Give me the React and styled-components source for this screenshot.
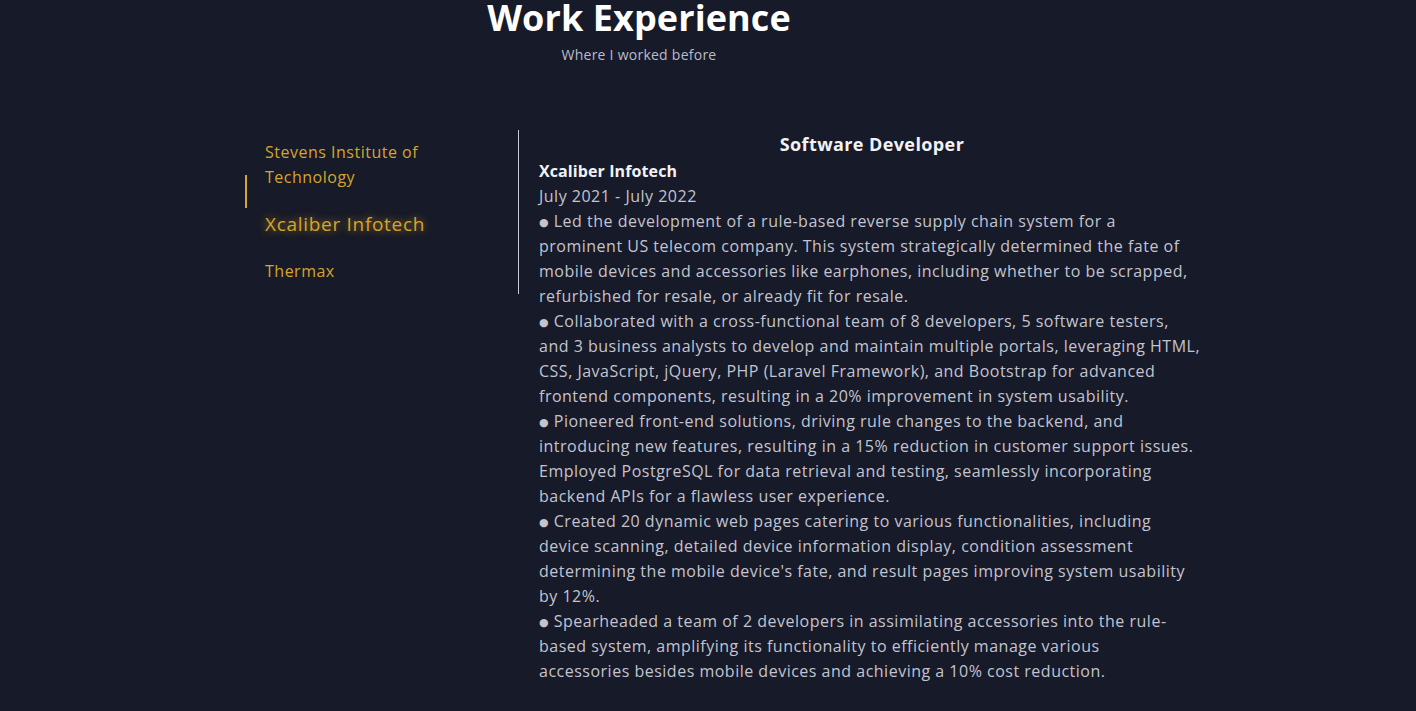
import styled, { createGlobalStyle } from 'styled-components';
import { useState } from 'react';

// each point is kept as the lines it breaks into, so the wraps stay fixed
const jobs = [
  {
    tab: 'Stevens Institute of Technology',
    role: 'Graduate Student',
    company: 'Stevens Institute of Technology',
    dates: 'Sept 2022 - Present',
    points: [],
  },
  {
    tab: 'Xcaliber Infotech',
    role: 'Software Developer',
    company: 'Xcaliber Infotech',
    dates: 'July 2021 - July 2022',
    points: [
      [
        'Led the development of a rule-based reverse supply chain system for a',
        'prominent US telecom company. This system strategically determined the fate of',
        'mobile devices and accessories like earphones, including whether to be scrapped,',
        'refurbished for resale, or already fit for resale.',
      ],
      [
        'Collaborated with a cross-functional team of 8 developers, 5 software testers,',
        'and 3 business analysts to develop and maintain multiple portals, leveraging HTML,',
        'CSS, JavaScript, jQuery, PHP (Laravel Framework), and Bootstrap for advanced',
        'frontend components, resulting in a 20% improvement in system usability.',
      ],
      [
        'Pioneered front-end solutions, driving rule changes to the backend, and',
        'introducing new features, resulting in a 15% reduction in customer support issues.',
        'Employed PostgreSQL for data retrieval and testing, seamlessly incorporating',
        'backend APIs for a flawless user experience.',
      ],
      [
        'Created 20 dynamic web pages catering to various functionalities, including',
        'device scanning, detailed device information display, condition assessment',
        "determining the mobile device's fate, and result pages improving system usability",
        'by 12%.',
      ],
      [
        'Spearheaded a team of 2 developers in assimilating accessories into the rule-',
        'based system, amplifying its functionality to efficiently manage various',
        'accessories besides mobile devices and achieving a 10% cost reduction.',
      ],
    ],
  },
  {
    tab: 'Thermax',
    role: 'Intern',
    company: 'Thermax',
    dates: '',
    points: [],
  },
];

const Experience = () => {
  const [active, setActive] = useState(1);
  const job = jobs[active];

  return (
    <Page>
      <GlobalStyle />
      <Header>
        <Title>Work Experience</Title>
        <Subtitle>Where I worked before</Subtitle>
      </Header>
      <Body>
        <TabList>
          <Indicator />
          {jobs.map((j, i) => (
            <Tab key={j.tab} $active={i === active} onClick={() => setActive(i)}>
              {j.tab}
            </Tab>
          ))}
        </TabList>
        <Details>
          <Role>{job.role}</Role>
          <Company>{job.company}</Company>
          <Text>{job.dates}</Text>
          {job.points.map((lines) => (
            <Text key={lines[0]}>
              {lines.map((line, i) => (
                <Line key={line}>
                  {i === 0 && <Bullet>●</Bullet>}
                  {i === 0 && ' '}
                  {line}
                </Line>
              ))}
            </Text>
          ))}
        </Details>
      </Body>
    </Page>
  );
};

export default Experience;

const GlobalStyle = createGlobalStyle`
  body {
    margin: 0;
    background: #171a28;
    font-family: "Open Sans", "DejaVu Sans", sans-serif;
  }
`;

const Page = styled.div`
  min-height: 711px;
  padding: 0 0 30px 245px;
  box-sizing: border-box;
  background: #171a28;
`;

const Header = styled.header`
  width: 788px;
  text-align: center;
`;

const Title = styled.h1`
  margin: 0;
  font-size: 36px;
  font-weight: 700;
  line-height: 36px;
  letter-spacing: 0.1px;
  color: #ffffff;
`;

const Subtitle = styled.p`
  margin: 9px 0 0;
  font-size: 14px;
  line-height: 20px;
  letter-spacing: 0.25px;
  color: #b9bccd;
`;

const Body = styled.div`
  display: flex;
  align-items: flex-start;
  margin-top: 65px;
`;

const TabList = styled.div`
  position: relative;
  width: 274px;
  padding: 10px 0;
  box-sizing: border-box;
  border-right: 1px solid #c9cad2;
  display: flex;
  flex-direction: column;
  gap: 20px;
`;

const Indicator = styled.span`
  position: absolute;
  left: 0;
  top: 45px;
  width: 2px;
  height: 33px;
  background: #d7a630;
`;

const Tab = styled.div`
  padding: 0 40px ${(p) => (p.$active ? '1px' : '0')} 20px;
  font-size: ${(p) => (p.$active ? '19px' : '16px')};
  line-height: ${(p) => (p.$active ? '28px' : '25px')};
  letter-spacing: ${(p) => (p.$active ? '0.7px' : '0.5px')};
  color: #d6a52c;
  text-shadow: ${(p) => (p.$active ? '0 0 8px rgba(226, 168, 40, 0.7)' : 'none')};
  cursor: pointer;
`;

const Details = styled.div`
  width: 666px;
  padding: 1px 0 0 20px;
`;

const Role = styled.h3`
  margin: 0 0 1px;
  text-align: center;
  font-size: 18px;
  line-height: 27px;
  font-weight: 700;
  letter-spacing: 0.4px;
  color: #f2f2f6;
`;

const Company = styled.h4`
  margin: 0;
  font-size: 16px;
  line-height: 25px;
  font-weight: 700;
  letter-spacing: 0.1px;
  color: #f2f2f6;
`;

const Text = styled.p`
  margin: 0;
  font-size: 16px;
  line-height: 25px;
  letter-spacing: 0.5px;
  color: #c3c4d0;
`;

const Line = styled.span`
  display: block;
  white-space: nowrap;
`;

const Bullet = styled.span`
  font-size: 11px;
  vertical-align: 1px;
`;
